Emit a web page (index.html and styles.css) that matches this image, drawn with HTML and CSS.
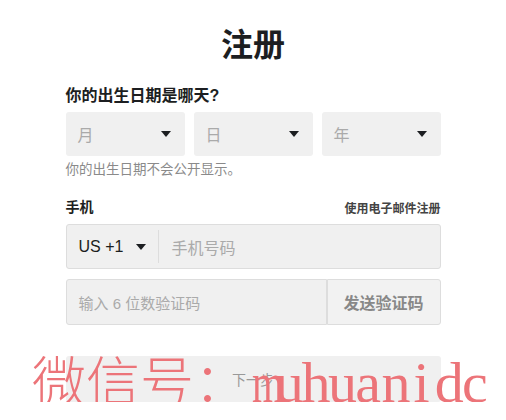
FILE: index.html
```html
<!DOCTYPE html>
<html lang="zh-CN">
  <head>
    <meta charset="UTF-8" />
    <meta name="viewport" content="width=device-width, initial-scale=1.0" />
    <title>注册</title>
    <link rel="stylesheet" href="styles.css">
  </head>
  <body>
    <main class="signup">
      <h1 class="title">注册</h1>

      <div class="label">你的出生日期是哪天?</div>
      <div class="dob">
        <div class="select"><span>月</span><i class="caret"></i></div>
        <div class="select"><span>日</span><i class="caret"></i></div>
        <div class="select"><span>年</span><i class="caret"></i></div>
      </div>
      <p class="hint">你的出生日期不会公开显示。</p>

      <div class="row-head">
        <span class="label small">手机</span>
        <a class="switch">使用电子邮件注册</a>
      </div>
      <div class="phone">
        <div class="country">US +1 <i class="caret"></i></div>
        <span class="placeholder">手机号码</span>
      </div>

      <div class="code">
        <div class="code-input"><span class="placeholder">输入 6 位数验证码</span></div>
        <div class="send">发送验证码</div>
      </div>

      <div class="next">下一步</div>
    </main>

    <!-- watermark from the screenshot, laid over the form -->
    <div class="watermark">微信号：<span class="wm-latin"><b class="wide">m</b><b>u</b><b>h</b><b>u</b><b>a</b><b>n</b><b>i</b><b>d</b><b>c</b></span></div>
  </body>
</html>
```

FILE: styles.css
```css
body {
  margin: 0;
  background: #fff;
  color: #1c1e21;
  font-family: "Liberation Sans", "Noto Sans CJK SC", sans-serif;
  position: relative;
}

.signup {
  width: 375px;
  margin: 0 auto;
  padding-top: 25px;
}

.title {
  margin: 0;
  font-size: 32px;
  line-height: 40px;
  font-weight: bold;
  text-align: center;
  color: #1c1e21;
}

.label {
  margin-top: 21px;
  font-size: 16px;
  line-height: 20px;
  font-weight: bold;
  color: #1c1e21;
}

.label.small {
  margin-top: 0;
  font-size: 14px;
  line-height: 18px;
}

.dob {
  display: grid;
  grid-template-columns: 1fr 1fr 1fr;
  gap: 9px;
  margin-top: 6px;
}

.select {
  height: 44px;
  background: #f0f0f0;
  border-radius: 3px;
  display: flex;
  align-items: center;
  justify-content: space-between;
  padding: 0 14px 0 12px;
  font-size: 16px;
  color: #aaa;
}

.caret {
  width: 0;
  height: 0;
  border-left: 5.5px solid transparent;
  border-right: 5.5px solid transparent;
  border-top: 6px solid #1c1e21;
}

.hint {
  margin: 5px 0 0;
  font-size: 13.5px;
  line-height: 18px;
  color: #8a8a8a;
}

.row-head {
  display: flex;
  justify-content: space-between;
  align-items: center;
  margin-top: 19px;
}

.switch {
  font-size: 12px;
  font-weight: bold;
  color: #444;
}

.phone {
  margin-top: 8px;
  height: 43px;
  background: #f0f0f0;
  border: 1px solid #ddd;
  border-radius: 3px;
  display: flex;
  align-items: center;
}

.country {
  display: flex;
  align-items: center;
  gap: 13px;
  padding: 0 12px;
  height: 33px;
  border-right: 1px solid #ddd;
  font-size: 16px;
  color: #1c1e21;
}

.country .caret {
  border-left-width: 5px;
  border-right-width: 5px;
}

.placeholder {
  font-size: 16px;
  color: #aaa;
}

.phone .placeholder {
  padding-left: 12px;
}

.code {
  margin-top: 10px;
  display: flex;
  height: 46px;
}

.code-input {
  flex: 1;
  background: #f0f0f0;
  border: 1px solid #ddd;
  border-radius: 3px 0 0 3px;
  display: flex;
  align-items: center;
  padding-left: 12px;
  font-size: 15px;
}

.code-input .placeholder {
  font-size: 15px;
}

.send {
  width: 112px;
  background: #f2f2f2;
  border: 1px solid #ddd;
  border-radius: 0 3px 3px 0;
  display: flex;
  align-items: center;
  justify-content: center;
  font-size: 16px;
  font-weight: bold;
  color: #888;
}

.next {
  margin-top: 31px;
  height: 46px;
  background: #f0f0f0;
  border-radius: 3px;
  display: flex;
  align-items: center;
  justify-content: center;
  font-size: 14px;
  color: #999;
}

.watermark {
  position: absolute;
  left: 32px;
  top: 348px;
  font-family: "Noto Sans CJK SC", serif;
  font-size: 54px;
  font-weight: 300;
  line-height: 62px;
  color: #ec7479;
  white-space: nowrap;
}

.wm-latin b {
  display: inline-block;
  width: 26.7px;
  text-align: center;
  font-family: "Liberation Serif", serif;
  font-size: 58px;
  font-weight: normal;
}

.wm-latin b.wide {
  transform: scaleX(0.7);
}
```
